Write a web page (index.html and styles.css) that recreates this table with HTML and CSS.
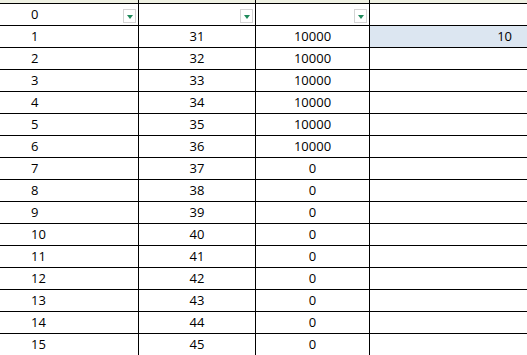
FILE: index.html
```html
<!DOCTYPE html>
<html>
<head>
<meta charset="utf-8">
<link rel="stylesheet" href="styles.css">
</head>
<body>
<div class="sheet">
  <div class="cell top"></div><div class="cell top"></div><div class="cell top"></div><div class="cell top last"></div>

  <div class="cell c1">0<span class="filter"></span></div>
  <div class="cell c2"><span class="filter"></span></div>
  <div class="cell c3"><span class="filter"></span></div>
  <div class="cell c4"></div>

  <div class="cell c1">1</div><div class="cell c2">31</div><div class="cell c3">10000</div><div class="cell c4 sel">10</div>
  <div class="cell c1">2</div><div class="cell c2">32</div><div class="cell c3">10000</div><div class="cell c4"></div>
  <div class="cell c1">3</div><div class="cell c2">33</div><div class="cell c3">10000</div><div class="cell c4"></div>
  <div class="cell c1">4</div><div class="cell c2">34</div><div class="cell c3">10000</div><div class="cell c4"></div>
  <div class="cell c1">5</div><div class="cell c2">35</div><div class="cell c3">10000</div><div class="cell c4"></div>
  <div class="cell c1">6</div><div class="cell c2">36</div><div class="cell c3">10000</div><div class="cell c4"></div>
  <div class="cell c1">7</div><div class="cell c2">37</div><div class="cell c3">0</div><div class="cell c4"></div>
  <div class="cell c1">8</div><div class="cell c2">38</div><div class="cell c3">0</div><div class="cell c4"></div>
  <div class="cell c1">9</div><div class="cell c2">39</div><div class="cell c3">0</div><div class="cell c4"></div>
  <div class="cell c1">10</div><div class="cell c2">40</div><div class="cell c3">0</div><div class="cell c4"></div>
  <div class="cell c1">11</div><div class="cell c2">41</div><div class="cell c3">0</div><div class="cell c4"></div>
  <div class="cell c1">12</div><div class="cell c2">42</div><div class="cell c3">0</div><div class="cell c4"></div>
  <div class="cell c1">13</div><div class="cell c2">43</div><div class="cell c3">0</div><div class="cell c4"></div>
  <div class="cell c1">14</div><div class="cell c2">44</div><div class="cell c3">0</div><div class="cell c4"></div>
  <div class="cell c1">15</div><div class="cell c2">45</div><div class="cell c3">0</div><div class="cell c4"></div>
</div>
</body>
</html>
```
FILE: styles.css
```css
html, body {
  margin: 0;
  padding: 0;
  background: #ffffff;
  overflow: hidden;
}
.sheet {
  display: grid;
  grid-template-columns: 139px 117px 114px 1fr;
  grid-template-rows: 4px;
  grid-auto-rows: 22px;
  font-family: "Open Sans", "Liberation Sans", Arial, sans-serif;
  font-size: 13px;
  color: #000000;
  width: 527px;
}
.cell {
  box-sizing: border-box;
  border-right: 1px solid #000;
  border-bottom: 1px solid #000;
  display: flex;
  align-items: center;
  padding-bottom: 2px;
  position: relative;
  white-space: nowrap;
}
.top {
  background: #eef0e2;
  padding-bottom: 0;
}
.last, .c4 {
  border-right: none;
}
.c1 {
  padding-left: 31px;
}
.c2, .c3 {
  justify-content: center;
}
.c4 {
  justify-content: flex-end;
  padding-right: 15px;
}
.sel {
  background: #dce6f1;
}
.filter {
  position: absolute;
  right: 2px;
  top: 5px;
  width: 13px;
  height: 14px;
  box-sizing: border-box;
  border: 1px solid #d4d4d4;
  background: #fff;
}
.filter::after {
  content: "";
  position: absolute;
  left: 3px;
  top: 5px;
  border-left: 3px solid transparent;
  border-right: 3px solid transparent;
  border-top: 4px solid #1f8a5b;
}
```
